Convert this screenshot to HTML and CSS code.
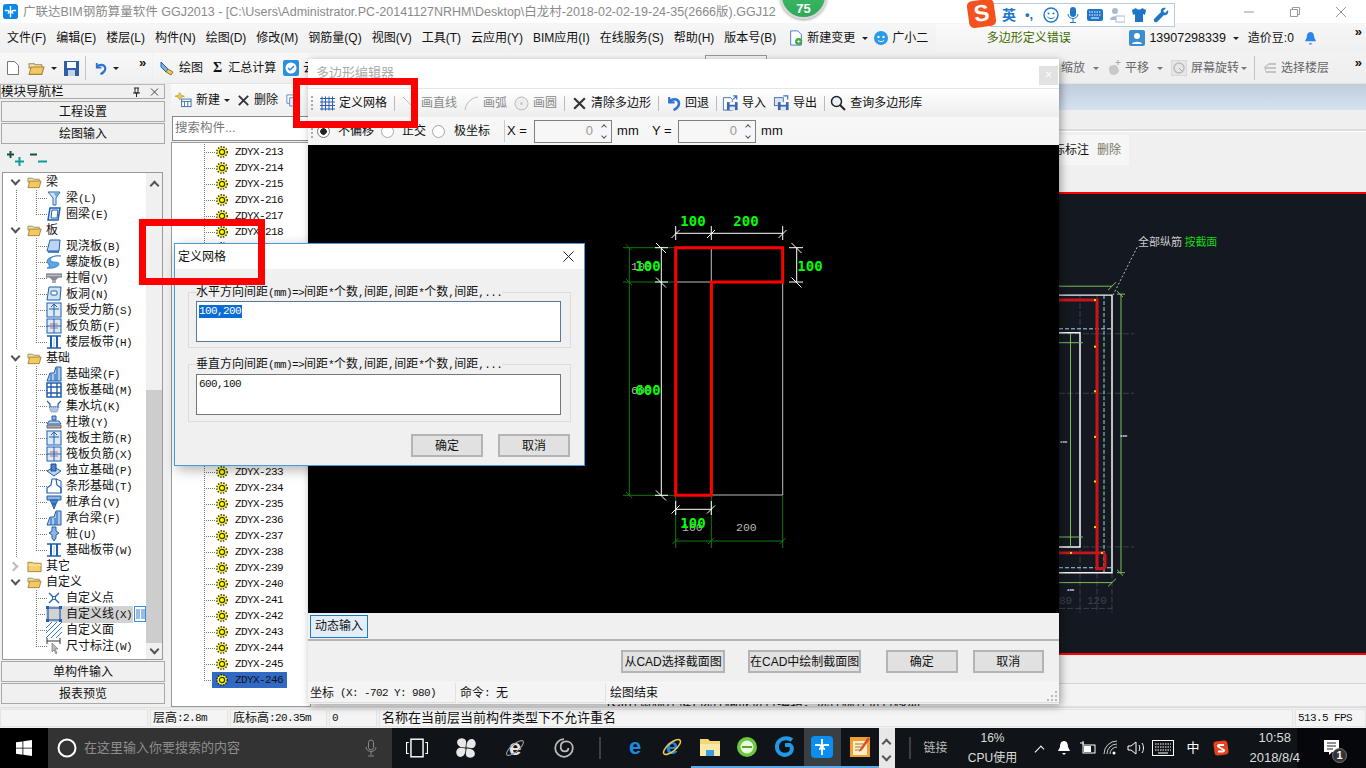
FILE: index.html
```html
<!DOCTYPE html>
<html lang="zh-CN">
<head>
<meta charset="utf-8">
<title>广联达BIM钢筋算量软件 GGJ2013</title>
<link rel="stylesheet" href="styles.css">
</head>
<body>
<svg class="defs" xmlns="http://www.w3.org/2000/svg">
  <symbol id="s-gear" viewBox="0 0 12 12"><circle cx="6" cy="6" r="5" fill="#ff0"/><circle cx="6" cy="6" r="5.2" fill="none" stroke="#222" stroke-width="1.4" stroke-dasharray="1.4 1.4"/><circle cx="6" cy="6" r="2.6" fill="none" stroke="#333" stroke-width="1.2"/></symbol>
  <symbol id="s-open" viewBox="0 0 16 14"><path d="M1 3h5l1 1h6v3H1z" fill="#f5e3a8" stroke="#9a8a5a"/><path d="M1 13l2-7h12l-2 7z" fill="#f3c862" stroke="#a5843a"/></symbol>
  <symbol id="s-closed" viewBox="0 0 16 14"><path d="M1 3h5l1 1h8v9H1z" fill="#f4cf6e" stroke="#a5843a"/><path d="M1 6h14" stroke="#fbeeb8"/></symbol>
  <symbol id="s-x" viewBox="0 0 14 14"><path d="M2 2l10 10M12 2L2 12" stroke="#333" stroke-width="2" fill="none"/></symbol>
  <symbol id="s-undo" viewBox="0 0 14 14"><path d="M3 1v5h5" fill="none" stroke="#2f72d2" stroke-width="2"/><path d="M3 6c2-4 8-4 9 0 .7 3-2 6-5 7" fill="none" stroke="#2f72d2" stroke-width="2.4"/></symbol>
  <symbol id="s-import" viewBox="0 0 18 18"><path d="M1 3h8l2 2v12H1z" fill="#fff" stroke="#3a66ad"/><rect x="5" y="8" width="12" height="9" fill="#3a66ad"/><rect x="8" y="8" width="6" height="3" fill="#fff"/><rect x="8" y="13" width="6" height="4" fill="#dde6f4"/><path d="M12 1h4v4M16 1l-4 4" fill="none" stroke="#2f72d2" stroke-width="1.3"/></symbol>
  <symbol id="s-export" viewBox="0 0 18 18"><rect x="1" y="3" width="10" height="9" fill="#dbe6f5" stroke="#3a66ad"/><rect x="5" y="8" width="12" height="9" fill="#3a66ad"/><rect x="8" y="8" width="6" height="3" fill="#fff"/><rect x="8" y="13" width="6" height="4" fill="#dde6f4"/><path d="M11 1h5v4" fill="none" stroke="#2f72d2" stroke-width="1.3"/></symbol>
  <symbol id="n-beam" viewBox="0 0 16 16"><path d="M2 2h12l-4 6v7H7V8z" fill="#cfe3f7" stroke="#2a6ab5"/><path d="M8 3l5 0-3 4" fill="#6fa8df"/></symbol>
  <symbol id="n-ring" viewBox="0 0 16 16"><path d="M4 2h10l-2 12H2z" fill="#e8f1fb" stroke="#1f5fae" stroke-width="1.5"/><path d="M6 4h6l-1 8H5z" fill="#fff" stroke="#1f5fae"/></symbol>
  <symbol id="n-slab" viewBox="0 0 16 16"><path d="M4 2h10l-1 11H1z" fill="#bcd6f2" stroke="#1f5fae"/><path d="M2 14h11" stroke="#1f5fae" stroke-width="1.5"/></symbol>
  <symbol id="n-spiral" viewBox="0 0 16 16"><path d="M15 2C8 1 3 4 5 7c2 2 8 0 8 3s-7 5-12 4C6 12 1 10 1 7 1 4 8 1 15 2z" fill="#5aa6e8" stroke="#1f5fae" stroke-width=".6"/></symbol>
  <symbol id="n-cap" viewBox="0 0 16 16"><path d="M0 4h16v3H0z" fill="#b8bcc4" stroke="#667"/><path d="M3 7h10l-3 3H6z" fill="#889"/><path d="M6 10h4v3H6z" fill="#aaa"/></symbol>
  <symbol id="n-hole" viewBox="0 0 16 16"><path d="M3 1h12l-1 13H1z" fill="#cfe3f7" stroke="#1f5fae"/><rect x="5" y="5" width="6" height="4" rx="1" fill="#fff" stroke="#1f5fae"/></symbol>
  <symbol id="n-rebar" viewBox="0 0 16 16"><rect x="1" y="1" width="14" height="14" fill="#dbe9f8" stroke="#1f5fae"/><path d="M8 2v12M3 7h10M5 5l3-3 3 3" fill="none" stroke="#1f5fae"/></symbol>
  <symbol id="n-neg" viewBox="0 0 16 16"><rect x="1" y="1" width="14" height="14" fill="#dbe9f8" stroke="#1f5fae"/><path d="M4 6h8M4 10h8" fill="none" stroke="#c04a4a" stroke-width=".8"/><path d="M8 1v14M1 8h14" fill="none" stroke="#1f5fae"/></symbol>
  <symbol id="n-band" viewBox="0 0 16 16"><path d="M1 2h14M1 14h14" stroke="#1f5fae" stroke-width="1.5"/><path d="M5 2v12M11 2v12" stroke="#1f5fae" stroke-width="2"/><path d="M7 4h2v9H7z" fill="#cfe3f7"/></symbol>
  <symbol id="n-found" viewBox="0 0 16 16"><path d="M1 15l3-8h4l2-6h5v14z" fill="#a9c8ec" stroke="#1f5fae"/><path d="M5 8v7M9 8v7M11 2v13" stroke="#1f5fae"/></symbol>
  <symbol id="n-raft" viewBox="0 0 16 16"><rect x="1" y="1" width="14" height="14" fill="#fff" stroke="#1f5fae" stroke-width="1.5"/><path d="M1 5h14M1 11h14M5 1v14M11 1v14" stroke="#1f5fae" stroke-width="1.4"/></symbol>
  <symbol id="n-pit" viewBox="0 0 16 16"><path d="M1 3l3 3v3h8V6l3-3" fill="none" stroke="#1f5fae" stroke-width="1.2"/><path d="M3 9h10l-2 5H5z" fill="#a9c8ec" stroke="#778" stroke-dasharray="1 1"/></symbol>
  <symbol id="n-pier" viewBox="0 0 16 16"><path d="M6 2h4v4H6z" fill="#8fb4de" stroke="#1f5fae"/><path d="M3 7h10l2 3H1z" fill="#bcd6f2" stroke="#1f5fae"/><path d="M1 11h14v3H1z" fill="#aaa" stroke="#667"/></symbol>
  <symbol id="n-iso" viewBox="0 0 16 16"><path d="M1 9l7-4 7 4-7 5z" fill="#bcd6f2" stroke="#1f5fae"/><path d="M5 2h5v7H5z" fill="#4d86c8" stroke="#1f4a8a"/></symbol>
  <symbol id="n-strip" viewBox="0 0 16 16"><path d="M6 1h4l1 6 4 3v5H1v-5l4-3z" fill="#fff" stroke="#1f5fae" stroke-width="1.2"/><path d="M10 1l5 2v12" fill="none" stroke="#1f5fae"/></symbol>
  <symbol id="n-cap2" viewBox="0 0 16 16"><path d="M1 2h14v4H1z" fill="#8fb4de" stroke="#1f5fae"/><path d="M4 6h8l-2 4H6zM6 10h4l-2 5z" fill="#4d86c8" stroke="#1f5fae"/></symbol>
  <symbol id="n-pile" viewBox="0 0 16 16"><path d="M6 1h4v4l3 2-3 2v3l-2 3-2-3V9L3 7l3-2z" fill="#8fb4de" stroke="#1f5fae"/></symbol>
  <symbol id="n-point" viewBox="0 0 16 16"><path d="M3 3l10 10M13 3L3 13" stroke="#1f5fae" stroke-width="1.3"/><circle cx="8" cy="8" r="1.6" fill="#fff" stroke="#1f5fae"/></symbol>
  <symbol id="n-line" viewBox="0 0 16 16"><rect x="2" y="2" width="12" height="12" fill="none" stroke="#1f5fae" stroke-width="1.2"/><path d="M0 0h3v3H0zM13 0h3v3h-3zM0 13h3v3H0zM13 13h3v3h-3z" fill="#1f5fae"/></symbol>
  <symbol id="n-face" viewBox="0 0 16 16"><path d="M0 6L6 0M0 11L11 0M0 16L16 0M5 16L16 5M10 16l6-6" stroke="#3a7ac8"/></symbol>
  <symbol id="n-dim" viewBox="0 0 16 16"><path d="M1 3h13M1 0v6M14 0v6" stroke="#333"/><path d="M6 5l0 9 2-2 2 4 1-1-2-4h3z" fill="#bbb" stroke="#666" stroke-width=".6"/></symbol>
</svg>

<div class="app">
  <header class="titlebar">
    <svg class="logo" viewBox="0 0 16 16"><rect width="16" height="16" rx="3" fill="#0b87e8"/><path d="M8 2v12M2 7h3c2 0 2 3 0 3M14 7h-3c-2 0-2 3 0 3" fill="none" stroke="#fff" stroke-width="1.5"/></svg>
    <span class="title-text">广联达BIM钢筋算量软件 GGJ2013 - [C:\Users\Administrator.PC-20141127NRHM\Desktop\白龙村-2018-02-02-19-24-35(2666版).GGJ12</span>
    <div class="win-controls">
      <svg class="wc" viewBox="0 0 12 12"><path d="M1 6h10" stroke="#999"/></svg>
      <svg class="wc" viewBox="0 0 12 12"><path d="M1.5 3.500h7v7h-7zM3.500 3.500v-2h7v7h-2" fill="none" stroke="#999"/></svg>
      <svg class="wc" viewBox="0 0 12 12"><path d="M1 1l10 10M11 1L1 11" stroke="#999"/></svg>
    </div>
  </header>

  <nav class="menubar">
    <span class="mi">文件(F)</span><span class="mi">编辑(E)</span><span class="mi">楼层(L)</span><span class="mi">构件(N)</span><span class="mi">绘图(D)</span><span class="mi">修改(M)</span><span class="mi">钢筋量(Q)</span><span class="mi">视图(V)</span><span class="mi">工具(T)</span><span class="mi">云应用(Y)</span><span class="mi">BIM应用(I)</span><span class="mi">在线服务(S)</span><span class="mi">帮助(H)</span><span class="mi">版本号(B)</span>
    <span class="mi mi-change"><svg class="ic16" viewBox="0 0 16 18"><path d="M2 1h8l4 4v12H2z" fill="#fff" stroke="#2f72d2"/><circle cx="11" cy="13" r="4" fill="#3aa53a"/><path d="M9 13h4M11 11v4" stroke="#fff"/></svg>新建变更<i class="caret"></i></span>
    <span class="mi mi-bot"><svg class="ic16" viewBox="0 0 16 16"><circle cx="8" cy="8" r="7" fill="#2a9be8"/><circle cx="5.500" cy="7" r="1.200" fill="#fff"/><circle cx="10.500" cy="7" r="1.200" fill="#fff"/><path d="M5 10.500c2 1.500 4 1.500 6 0" stroke="#fff" fill="none"/></svg>广小二</span>
    <span class="msg-tab">多边形定义错误</span>
    <span class="mi mi-user"><svg class="ic16" viewBox="0 0 16 16"><rect width="16" height="16" rx="2" fill="#3d8ecf"/><circle cx="8" cy="6" r="3" fill="#fff"/><path d="M3 14c0-3 10-3 10 0z" fill="#fff"/></svg>13907298339<i class="caret caret-user"></i></span>
    <span class="mi mi-bean">造价豆:0</span>
    <svg class="bell" viewBox="0 0 14 16"><path d="M7 1c3 0 4 3 4 6l2 4H1l2-4c0-3 1-6 4-6z" fill="#2a86e8"/><path d="M5 13h4l-2 2z" fill="#2a86e8"/></svg>
    <span class="chev">»</span>
  </nav>

  <div class="toolbar">
    <div class="tb-seg tb-a">
      <svg class="tb-new" viewBox="0 0 12 14"><path d="M.5.500h7l4 4v9H.5z" fill="#fff" stroke="#777"/></svg>
      <svg class="ic17" viewBox="0 0 16 14"><use href="#s-open"/></svg><i class="caret"></i>
      <svg class="tb-save" viewBox="0 0 15 15"><rect width="15" height="15" fill="#2d5ea8"/><rect x="3" y="1" width="9" height="6" fill="#fff"/><rect x="4" y="9" width="7" height="6" fill="#c5d2e4"/></svg>
      <span class="tb-sep"></span>
      <svg class="ic13" viewBox="0 0 14 14"><use href="#s-undo"/></svg><i class="caret"></i>
      <span class="chev">»</span>
    </div>
    <div class="tb-seg tb-b">
      <span class="tb-i"><svg class="ic16" viewBox="0 0 16 16"><path d="M2 2l7 7-2 3-5-5z" fill="#7fb0e6" stroke="#2a5fa8"/><path d="M9 9l5 3-2 3-5-3z" fill="#e8c468" stroke="#9a7a30"/></svg>绘图</span>
      <span class="tb-i tb-sigma"><b class="sigma">Σ</b>汇总计算</span>
      <span class="tb-i tb-cloud"><svg class="ic16" viewBox="0 0 16 16"><rect width="16" height="16" rx="2" fill="#2b8fe0"/><circle cx="8" cy="8" r="5.500" fill="#fff"/><path d="M5 8l2 2 4-4" stroke="#2b8fe0" fill="none" stroke-width="1.500"/></svg>云</span>
    </div>
    <span class="tb-tab"></span>
    <div class="tb-seg tb-c">
      <span class="tb-i dim">缩放<i class="caret caret-gray"></i></span>
      <span class="tb-i dim"><svg class="ic14" viewBox="0 0 14 16"><path d="M2 8c0-3 6-4 8-2l2 4c0 3-3 5-6 5-3 0-4-3-4-7z" fill="#c8c8c8"/><path d="M11 0v5M8.500 2.500h5" stroke="#aaa"/></svg>平移<i class="caret caret-gray"></i></span>
      <span class="tb-i dim tb-rotate"><svg class="ic16" viewBox="0 0 16 16"><rect width="16" height="16" rx="2" fill="#e6e6e6" stroke="#ccc"/><circle cx="8" cy="8" r="5" fill="none" stroke="#bbb" stroke-width="1.500"/><path d="M8 8l3 3" stroke="#aaa"/></svg>屏幕旋转<i class="caret caret-gray"></i></span>
      <span class="tb-sep"></span>
      <span class="tb-i dim"><svg class="ic14" viewBox="0 0 14 14"><path d="M1 6l5-4h7v2H6L3 6h10v2H3v2h10v2H3z" fill="#c4c4c4"/></svg>选择楼层</span>
      <span class="chev">»</span>
    </div>
  </div>

  <div class="workspace">
    <aside class="nav">
      <div class="nav-title"><span>模块导航栏</span><span class="nav-title-icons"><svg class="ic9" viewBox="0 0 9 10"><path d="M2 1h5M3 1v5h3V1M1 6h7M4.500 6v4" stroke="#222" fill="none"/></svg><svg class="ic9" viewBox="0 0 9 9"><path d="M1 1l7 7M8 1L1 8" stroke="#444"/></svg></span></div>
      <div class="nav-btn">工程设置</div>
      <div class="nav-btn">绘图输入</div>
      <div class="nav-tools">
        <svg class="tool-ic" viewBox="0 0 18 16"><path d="M3.500 0v7M0 3.500h7" stroke="#14553a" stroke-width="2"/><path d="M12.500 6v9M8 10.500h9" stroke="#129a9a" stroke-width="2"/></svg>
        <svg class="tool-ic" viewBox="0 0 18 16"><path d="M0 3.500h7" stroke="#14553a" stroke-width="2"/><path d="M8 10.500h9" stroke="#129a9a" stroke-width="2"/></svg>
      </div>
      <div class="nav-tree">
        <div class="tree-body">
          <div class="trunk">
            <div class="t-head"><i class="arrow open"></i><svg class="folder"><use href="#s-open"/></svg><span>梁</span></div>
            <div class="t-kid"><svg class="n"><use href="#n-beam"/></svg><span class="lbl">梁<span class="lat">(L)</span></span></div>
            <div class="t-kid end"><svg class="n"><use href="#n-ring"/></svg><span class="lbl">圈梁<span class="lat">(E)</span></span></div>
            <div class="t-head"><i class="arrow open"></i><svg class="folder"><use href="#s-open"/></svg><span>板</span></div>
            <div class="t-kid"><svg class="n"><use href="#n-slab"/></svg><span class="lbl">现浇板<span class="lat">(B)</span></span></div>
            <div class="t-kid"><svg class="n"><use href="#n-spiral"/></svg><span class="lbl">螺旋板<span class="lat">(B)</span></span></div>
            <div class="t-kid"><svg class="n"><use href="#n-cap"/></svg><span class="lbl">柱帽<span class="lat">(V)</span></span></div>
            <div class="t-kid"><svg class="n"><use href="#n-hole"/></svg><span class="lbl">板洞<span class="lat">(N)</span></span></div>
            <div class="t-kid"><svg class="n"><use href="#n-rebar"/></svg><span class="lbl">板受力筋<span class="lat">(S)</span></span></div>
            <div class="t-kid"><svg class="n"><use href="#n-neg"/></svg><span class="lbl">板负筋<span class="lat">(F)</span></span></div>
            <div class="t-kid end"><svg class="n"><use href="#n-band"/></svg><span class="lbl">楼层板带<span class="lat">(H)</span></span></div>
            <div class="t-head"><i class="arrow open"></i><svg class="folder"><use href="#s-open"/></svg><span>基础</span></div>
            <div class="t-kid"><svg class="n"><use href="#n-found"/></svg><span class="lbl">基础梁<span class="lat">(F)</span></span></div>
            <div class="t-kid"><svg class="n"><use href="#n-raft"/></svg><span class="lbl">筏板基础<span class="lat">(M)</span></span></div>
            <div class="t-kid"><svg class="n"><use href="#n-pit"/></svg><span class="lbl">集水坑<span class="lat">(K)</span></span></div>
            <div class="t-kid"><svg class="n"><use href="#n-pier"/></svg><span class="lbl">柱墩<span class="lat">(Y)</span></span></div>
            <div class="t-kid"><svg class="n"><use href="#n-rebar"/></svg><span class="lbl">筏板主筋<span class="lat">(R)</span></span></div>
            <div class="t-kid"><svg class="n"><use href="#n-neg"/></svg><span class="lbl">筏板负筋<span class="lat">(X)</span></span></div>
            <div class="t-kid"><svg class="n"><use href="#n-iso"/></svg><span class="lbl">独立基础<span class="lat">(P)</span></span></div>
            <div class="t-kid"><svg class="n"><use href="#n-strip"/></svg><span class="lbl">条形基础<span class="lat">(T)</span></span></div>
            <div class="t-kid"><svg class="n"><use href="#n-cap2"/></svg><span class="lbl">桩承台<span class="lat">(V)</span></span></div>
            <div class="t-kid"><svg class="n"><use href="#n-found"/></svg><span class="lbl">承台梁<span class="lat">(F)</span></span></div>
            <div class="t-kid"><svg class="n"><use href="#n-pile"/></svg><span class="lbl">桩<span class="lat">(U)</span></span></div>
            <div class="t-kid end"><svg class="n"><use href="#n-band"/></svg><span class="lbl">基础板带<span class="lat">(W)</span></span></div>
          </div>
          <div class="t-head"><i class="arrow closed"></i><svg class="folder"><use href="#s-closed"/></svg><span>其它</span></div>
          <div class="t-head"><i class="arrow open"></i><svg class="folder"><use href="#s-open"/></svg><span>自定义</span></div>
          <div class="t-kid"><svg class="n"><use href="#n-point"/></svg><span class="lbl">自定义点</span></div>
          <div class="t-kid sel"><svg class="n"><use href="#n-line"/></svg><span class="lbl lbl-sel">自定义线<span class="lat">(X)</span></span><svg class="mini" viewBox="0 0 12 16"><rect x=".5" y=".5" width="11" height="15" fill="#fff" stroke="#3a8ee0"/><path d="M3 3v10M5 3v10M8 3v10M10 3v10" stroke="#3a7ac8"/></svg></div>
          <div class="t-kid"><svg class="n"><use href="#n-face"/></svg><span class="lbl">自定义面</span></div>
          <div class="t-kid end"><svg class="n"><use href="#n-dim"/></svg><span class="lbl">尺寸标注<span class="lat">(W)</span></span></div>
        </div>
        <div class="vscroll">
          <span class="sb-arrow"><i class="chev-up"></i></span>
          <span class="sb-track"></span>
          <span class="sb-thumb"></span>
          <span class="sb-arrow"><i class="chev-down"></i></span>
        </div>
      </div>
      <div class="nav-btn">单构件输入</div>
      <div class="nav-btn">报表预览</div>
    </aside>

    <section class="comp">
      <div class="comp-tools">
        <span class="tb-i"><svg class="ic17" viewBox="0 0 18 16"><path d="M5 0l1.500 3L10 4 6.500 5 5 8 3.500 5 0 4l3.500-1z" fill="#f2c94c" stroke="#a98a20" stroke-width=".6"/><rect x="7" y="7" width="10" height="8" fill="#fff" stroke="#3a6fb0"/><path d="M7 9.500h10M10 9.500V15M13.500 9.500V15" stroke="#3a6fb0"/></svg>新建<i class="caret"></i></span>
        <span class="tb-i"><svg class="ic13" viewBox="0 0 14 14"><use href="#s-x"/></svg>删除</span>
        <svg class="ic13" viewBox="0 0 12 14"><path d="M1 1h7v9H1z" fill="#fff" stroke="#5a87c0"/><path d="M4 4h7v9H4z" fill="#e6eefa" stroke="#5a87c0"/></svg>
      </div>
      <div class="comp-search">搜索构件...</div>
      <div class="comp-tree">
        <div class="c-row"><svg class="gear"><use href="#s-gear"/></svg><span>ZDYX-213</span></div>
        <div class="c-row"><svg class="gear"><use href="#s-gear"/></svg><span>ZDYX-214</span></div>
        <div class="c-row"><svg class="gear"><use href="#s-gear"/></svg><span>ZDYX-215</span></div>
        <div class="c-row"><svg class="gear"><use href="#s-gear"/></svg><span>ZDYX-216</span></div>
        <div class="c-row"><svg class="gear"><use href="#s-gear"/></svg><span>ZDYX-217</span></div>
        <div class="c-row"><svg class="gear"><use href="#s-gear"/></svg><span>ZDYX-218</span></div>
        <div class="c-row"><svg class="gear"><use href="#s-gear"/></svg><span>ZDYX-219</span></div>
        <div class="c-row"><svg class="gear"><use href="#s-gear"/></svg><span>ZDYX-220</span></div>
        <div class="c-row"><svg class="gear"><use href="#s-gear"/></svg><span>ZDYX-221</span></div>
        <div class="c-row"><svg class="gear"><use href="#s-gear"/></svg><span>ZDYX-222</span></div>
        <div class="c-row"><svg class="gear"><use href="#s-gear"/></svg><span>ZDYX-223</span></div>
        <div class="c-row"><svg class="gear"><use href="#s-gear"/></svg><span>ZDYX-224</span></div>
        <div class="c-row"><svg class="gear"><use href="#s-gear"/></svg><span>ZDYX-225</span></div>
        <div class="c-row"><svg class="gear"><use href="#s-gear"/></svg><span>ZDYX-226</span></div>
        <div class="c-row"><svg class="gear"><use href="#s-gear"/></svg><span>ZDYX-227</span></div>
        <div class="c-row"><svg class="gear"><use href="#s-gear"/></svg><span>ZDYX-228</span></div>
        <div class="c-row"><svg class="gear"><use href="#s-gear"/></svg><span>ZDYX-229</span></div>
        <div class="c-row"><svg class="gear"><use href="#s-gear"/></svg><span>ZDYX-230</span></div>
        <div class="c-row"><svg class="gear"><use href="#s-gear"/></svg><span>ZDYX-231</span></div>
        <div class="c-row"><svg class="gear"><use href="#s-gear"/></svg><span>ZDYX-232</span></div>
        <div class="c-row"><svg class="gear"><use href="#s-gear"/></svg><span>ZDYX-233</span></div>
        <div class="c-row"><svg class="gear"><use href="#s-gear"/></svg><span>ZDYX-234</span></div>
        <div class="c-row"><svg class="gear"><use href="#s-gear"/></svg><span>ZDYX-235</span></div>
        <div class="c-row"><svg class="gear"><use href="#s-gear"/></svg><span>ZDYX-236</span></div>
        <div class="c-row"><svg class="gear"><use href="#s-gear"/></svg><span>ZDYX-237</span></div>
        <div class="c-row"><svg class="gear"><use href="#s-gear"/></svg><span>ZDYX-238</span></div>
        <div class="c-row"><svg class="gear"><use href="#s-gear"/></svg><span>ZDYX-239</span></div>
        <div class="c-row"><svg class="gear"><use href="#s-gear"/></svg><span>ZDYX-240</span></div>
        <div class="c-row"><svg class="gear"><use href="#s-gear"/></svg><span>ZDYX-241</span></div>
        <div class="c-row"><svg class="gear"><use href="#s-gear"/></svg><span>ZDYX-242</span></div>
        <div class="c-row"><svg class="gear"><use href="#s-gear"/></svg><span>ZDYX-243</span></div>
        <div class="c-row"><svg class="gear"><use href="#s-gear"/></svg><span>ZDYX-244</span></div>
        <div class="c-row"><svg class="gear"><use href="#s-gear"/></svg><span>ZDYX-245</span></div>
        <div class="c-row c-last"><svg class="gear"><use href="#s-gear"/></svg><span class="c-sel">ZDYX-246</span></div>
      </div>
    </section>

    <main class="stage">
      <div class="stage-band"></div>
      <div class="stage-gap"></div>
      <div class="stage-attr"><span class="attr-box"><span>坐标标注</span><span class="attr-del">删除</span></span></div>
      <svg class="cad" viewBox="311 192 1055 463" preserveAspectRatio="none">
        <g fill="none" stroke="#3a404c">
          <path d="M1080 294v321M1097 294v321M1112 294v321M1059 333h75M1059 393h75M1059 548h75M1059 610h53" stroke-dasharray="6 2"/>
        </g>
        <g fill="none" stroke="#a9d4ee" stroke-dasharray="4 2">
          <path d="M1104 294v280M1059 328h53M1059 569h53"/>
        </g>
        <g fill="none" stroke="#f2f2f2" stroke-width="1.500">
          <path d="M1059 294h53v280h-53M1059 332h21v216h-21"/>
        </g>
        <g fill="none" stroke="#7cc05a">
          <path d="M1059 285h53M1121 293v281M1117 293h8M1117 574h8M1059 584h53M1070.500 333v215M1059 342h24M1059 538h24"/>
          <path d="M1108 289l8-8M1108 588l8-8M1117 290l6 6M1117 571l6 6"/>
        </g>
        <g fill="none" stroke="#c6161c" stroke-width="3">
          <path d="M1059 299h38v271h5q3 0 3-3v-10q0-3-3-3h-43"/>
        </g>
        <g fill="#ffd800">
          <rect x="1094" y="298" width="2" height="2"/><rect x="1094" y="345" width="2" height="2"/><rect x="1094" y="390" width="2" height="2"/><rect x="1094" y="436" width="2" height="2"/><rect x="1094" y="481" width="2" height="2"/><rect x="1094" y="527" width="2" height="2"/><rect x="1070" y="553" width="2" height="2"/><rect x="1101" y="553" width="2" height="2"/>
        </g>
        <path d="M1113 294l25-50" stroke="#bbb" stroke-dasharray="2 2" fill="none"/>
        <text x="1138" y="244" class="cad-label">全部纵筋 <tspan class="cad-green">按截面</tspan></text>
        <text x="1087" y="606" class="cad-dim">120</text>
        <text x="1059" y="606" class="cad-dim">80</text>
        <text x="1060" y="443" class="cad-tiny">200</text>
        <text x="1120" y="437" class="cad-tiny">200</text>
        <text x="1067" y="592" class="cad-tiny">200</text>
      </svg>
      <div class="stage-lower"></div>
      <div class="stage-hint">(Ctrl+鼠标左键) 选择构成进行编辑，选择标注进行移动</div>
    </main>
  </div>

  <footer class="statusbar">
    <span class="st st-a"></span>
    <span class="st st-b">层高<span class="lat">:2.8m</span></span>
    <span class="st st-c">底标高<span class="lat">:20.35m</span></span>
    <span class="st st-d"><span class="lat">0</span></span>
    <span class="st st-e">名称在当前层当前构件类型下不允许重名</span>
    <span class="st st-f"><span class="lat">513.5 FPS</span></span>
  </footer>

  <div class="taskbar">
    <span class="start"><svg class="win" viewBox="0 0 16 16"><path d="M0 2.300l6.500-.9v6.300H0zM7.300 1.300L16 0v7.700H7.300zM0 8.400h6.500v6.300L0 13.800zM7.300 8.400H16V16l-8.700-1.200z" fill="#fff"/></svg></span>
    <span class="search"><svg class="cortana" viewBox="0 0 20 20"><circle cx="10" cy="10" r="8.500" fill="none" stroke="#fff" stroke-width="2"/></svg><span class="search-text">在这里输入你要搜索的内容</span><svg class="mic" viewBox="0 0 12 18"><rect x="3.500" y="1" width="5" height="10" rx="2.500" fill="none" stroke="#888"/><path d="M1 8c0 6 10 6 10 0M6 13v3M3 17h6" fill="none" stroke="#888"/></svg></span>
    <span class="task t49"><svg class="ti" viewBox="0 0 20 18"><rect x="4.500" y="1" width="11" height="16" fill="none" stroke="#fff" stroke-width="1.300"/><path d="M2.500 4H0.500v10h2M17.500 4h2v10h-2" fill="none" stroke="#fff"/></svg></span>
    <span class="task t49"><svg class="ti" viewBox="0 0 22 22"><g fill="#e8e8e8"><path d="M10.500 10.500C4 11 1 7 2.500 3.500 5 0 10 1 11 4c.5 2-.5 4-.5 6.500z"/><path d="M11.500 10.500C11 4 15 1 18.500 2.500 22 5 21 10 18 11c-2 .5-4-.5-6.500-.5z"/><path d="M11.500 11.500C18 11 21 15 19.500 18.500 17 22 12 21 11 18c-.5-2 .5-4 .5-6.500z"/><path d="M10.500 11.500C11 18 7 21 3.500 19.500 0 17 1 12 4 11c2-.5 4 .5 6.500.5z"/></g></svg></span>
    <span class="task t49"><svg class="ti" viewBox="0 0 24 24"><text x="12" y="20" class="ie-glyph ie-white">e</text><ellipse cx="12" cy="12" rx="11.500" ry="4" transform="rotate(-40 12 12)" fill="none" stroke="#9a9a9a" stroke-width="1.200"/></svg></span>
    <span class="task t49"><svg class="ti" viewBox="0 0 20 20"><path d="M10 2a8 8 0 1 0 8 8c0-4-3-6-6-6s-5 2-5 5 2 4 4 4 3-1 3-3" fill="none" stroke="#bbb" stroke-width="1.600"/></svg></span>
    <span class="tk-sep"></span>
    <span class="task t37"><svg class="ti" viewBox="0 0 24 24"><text x="12" y="20" class="ie-glyph ie-blue">e</text></svg></span>
    <span class="task t37"><svg class="ti" viewBox="0 0 24 24"><text x="12" y="20" class="ie-glyph ie-blue">e</text><ellipse cx="12" cy="12" rx="11.500" ry="4.500" transform="rotate(-40 12 12)" fill="none" stroke="#f2c94c" stroke-width="1.600"/></svg></span>
    <span class="task t37 run"><svg class="ti" viewBox="0 0 22 20"><path d="M1 2h8l2 2h10v15H1z" fill="#f5d77a"/><path d="M1 7h20v12H1z" fill="#fbe9a8"/><path d="M7 13h8v6H7z" fill="#3c9be0"/></svg></span>
    <span class="task t37 run"><svg class="ti" viewBox="0 0 22 22"><circle cx="11" cy="11" r="10" fill="#6cc83c"/><circle cx="11" cy="11" r="6.500" fill="#eafbe0"/><path d="M6 11h10" stroke="#5aa82a" stroke-width="2"/></svg></span>
    <span class="task t37 run"><svg class="ti" viewBox="0 0 22 22"><path d="M18 4C12 0 3 3 3 11c0 7 8 10 13 6 3-3 2-7 0-8h-5" fill="none" stroke="#1e9ae8" stroke-width="4"/></svg></span>
    <span class="task t37 run active"><svg class="ti" viewBox="0 0 22 22"><rect width="22" height="22" rx="4" fill="#0b8ef0"/><path d="M11 3v16M4 9h4c3 0 3 4 0 4M18 9h-4c-3 0-3 4 0 4" fill="none" stroke="#fff" stroke-width="1.800"/></svg></span>
    <span class="task t37 run"><svg class="ti" viewBox="0 0 22 22"><rect x="1" y="1" width="20" height="20" fill="#f0a030"/><path d="M4 5h14v14H4z" fill="#fbeec8"/><path d="M6 8h9M6 11h9M6 14h6" stroke="#a87a30"/><path d="M19 1l-8 12-1 3 3-2 8-11z" fill="#d8502a"/></svg></span>
    <span class="tk-scroll"><i class="chev-up"></i><i class="chev-down"></i></span>
    <span class="tk-sep tk-sep2"></span>
    <span class="tk-link">链接</span>
    <span class="tk-cpu"><span>16%</span><span>CPU使用</span></span>
    <span class="tray">
      <i class="tray-up"></i>
      <svg class="tr" viewBox="0 0 14 16"><path d="M7 1c3 0 4 3 4 6l2 4H1l2-4c0-3 1-6 4-6zM5 13h4l-2 2z" fill="#fff"/></svg>
      <svg class="tr" viewBox="0 0 18 16"><rect x="4" y="5" width="12" height="8" fill="none" stroke="#fff"/><rect x="5" y="6" width="7" height="6" fill="#fff"/><path d="M4 1v4M1 3h4" stroke="#fff"/></svg>
      <svg class="tr" viewBox="0 0 18 16"><path d="M1 14a13 13 0 0 1 13-13M4 14a10 10 0 0 1 10-10M7 14a7 7 0 0 1 7-7" fill="none" stroke="#ccc"/><circle cx="11" cy="13" r="1.500" fill="#fff"/></svg>
      <svg class="tr" viewBox="0 0 18 16"><path d="M1 6h3l5-4v12l-5-4H1z" fill="none" stroke="#fff"/><path d="M12 5c1 2 1 4 0 6M15 3c2 3 2 7 0 10" fill="none" stroke="#fff"/></svg>
      <svg class="tr-kb" viewBox="0 0 22 16"><rect x=".5" y=".5" width="21" height="15" fill="none" stroke="#fff"/><path d="M3 4h16M3 7h16M3 10h16" stroke="#fff" stroke-dasharray="1.500 1"/><path d="M6 13h10" stroke="#fff"/></svg>
      <span class="tr-zh">中</span>
      <svg class="tr" viewBox="0 0 16 16"><rect x="1" y="1" width="14" height="14" rx="3" fill="#e8431a" transform="rotate(-8 8 8)"/><path d="M11 5H6q-1.500 0-1 1.500L11 10q.5 1.500-1 1.500H5" fill="none" stroke="#fff" stroke-width="1.800"/></svg>
    </span>
    <span class="clock"><span>10:58</span><span>2018/8/4</span></span>
    <span class="notify"><svg class="notify-ic" viewBox="0 0 16 16"><path d="M0 0h15v12H8l-3 3v-3H0z" fill="#fff"/><path d="M3 3h9M3 6h9M3 9h6" stroke="#222"/></svg><b class="notify-n">1</b></span>
  </div>

  <div class="badge"><span>75</span></div>

  <div class="ime">
    <span class="ime-s"><span>S</span></span>
    <span class="ime-bar">
      <b class="ime-en">英</b>
      <b class="ime-punc">•,</b>
      <svg class="ime-ic" viewBox="0 0 16 16"><circle cx="8" cy="8" r="7" fill="none" stroke="#1e76c8" stroke-width="1.400"/><circle cx="5.500" cy="6.500" r="1" fill="#1e76c8"/><circle cx="10.500" cy="6.500" r="1" fill="#1e76c8"/><path d="M4.500 10c2 2 5 2 7 0" stroke="#1e76c8" fill="none"/></svg>
      <svg class="ime-ic" viewBox="0 0 16 16"><rect x="5" y="0" width="6" height="10" rx="3" fill="#1e76c8"/><path d="M3 7c0 6 10 6 10 0M8 12v3M5 15.500h6" stroke="#1e76c8" fill="none"/></svg>
      <svg class="ime-ic" viewBox="0 0 16 16"><rect y="2" width="16" height="12" rx="2" fill="#1e76c8"/><path d="M2 5h12M2 8h12" stroke="#fff" stroke-dasharray="1.500 1"/><path d="M4 11h8" stroke="#fff"/></svg>
      <svg class="ime-ic" viewBox="0 0 16 16"><circle cx="6" cy="4" r="3" fill="#a9bccf"/><path d="M1 13c0-5 9-5 9 0z" fill="#a9bccf"/><rect x="7" y="9" width="9" height="6" fill="#fff" stroke="#a9bccf"/></svg>
      <svg class="ime-ic" viewBox="0 0 16 16"><path d="M5 1L1 3l1 5 2-1v8h8V7l2 1 1-5-4-2c-1 2-5 2-6 0z" fill="#1e76c8"/></svg>
      <svg class="ime-ic" viewBox="0 0 16 16"><path d="M15 3l-3 3-2-2 3-3c-3-1-6 1-5 4L1 12c-1 2 1 4 3 3l7-7c3 1 5-2 4-5z" fill="#1e76c8"/></svg>
    </span>
  </div>

  <section class="poly">
    <div class="poly-title"><span class="poly-name">多边形编辑器</span><span class="poly-close">×</span></div>
    <div class="poly-tools">
      <i class="grip"></i>
      <span class="tb-i"><svg class="ic15" viewBox="0 0 15 14"><path d="M0 2h15M0 5.500h15M0 9h15M0 12.500h15M2 0v14M5.500 0v14M9 0v14M12.500 0v14" stroke="#2a5fb0"/></svg>定义网格</span>
      <span class="pt-sep"></span>
      <span class="tb-i dim2"><svg class="ic15" viewBox="0 0 15 15"><path d="M1 1l13 13" stroke="#bbb"/></svg>画直线</span>
      <span class="tb-i dim2"><svg class="ic15" viewBox="0 0 15 15"><path d="M1 14C2 7 7 2 14 1" fill="none" stroke="#bbb"/></svg>画弧</span>
      <span class="tb-i dim2"><svg class="ic15" viewBox="0 0 15 15"><circle cx="7.500" cy="7.500" r="6.500" fill="#eee" stroke="#bbb"/><circle cx="7.500" cy="7.500" r="1.500" fill="#ccc"/></svg>画圆</span>
      <span class="pt-sep"></span>
      <span class="tb-i"><svg class="ic15" viewBox="0 0 14 14"><use href="#s-x"/></svg>清除多边形</span>
      <span class="pt-sep"></span>
      <span class="tb-i"><svg class="ic15" viewBox="0 0 14 14"><use href="#s-undo"/></svg>回退</span>
      <span class="pt-sep pt-sep-tight"></span>
      <span class="tb-i tb-disk"><svg class="ic17" viewBox="0 0 18 18"><use href="#s-import"/></svg>导入</span>
      <span class="tb-i tb-disk"><svg class="ic17" viewBox="0 0 18 18"><use href="#s-export"/></svg>导出</span>
      <span class="pt-sep pt-sep-tight"></span>
      <span class="tb-i"><svg class="ic16" viewBox="0 0 16 16"><circle cx="6.500" cy="6.500" r="5" fill="#eaf3fb" stroke="#222" stroke-width="1.500"/><path d="M10 10l5 5" stroke="#222" stroke-width="2"/></svg>查询多边形库</span>
    </div>
    <div class="poly-opts">
      <i class="grip"></i>
      <label class="radio on">不偏移</label>
      <label class="radio r2">正交</label>
      <label class="radio r3">极坐标</label>
      <span class="opt-sep"></span>
      <span class="xy">X =</span>
      <span class="spin"><span>0</span><span class="spin-btns"><i class="chev-up small"></i><i class="chev-down small"></i></span></span>
      <span class="unit">mm</span>
      <span class="xy xy-y">Y =</span>
      <span class="spin"><span>0</span><span class="spin-btns"><i class="chev-up small"></i><i class="chev-down small"></i></span></span>
      <span class="unit">mm</span>
    </div>
    <svg class="poly-canvas" viewBox="308 145 751 468">
      <g fill="none" stroke="#bdbdbd">
        <path d="M711.300 248v34M676 282h35M782.700 282v213M711 495h72"/>
      </g>
      <g fill="none" stroke="#0f7a0f">
        <path d="M623 247.700h53M623 282h53M623 495.300h53M629.300 247.700v247.600"/>
        <path d="M626 244.500l6 6M626 279l6 6M626 492l6 6"/>
        <path d="M675.700 495v53M711.300 495v53M782.700 495v53M675.700 541h107"/>
        <path d="M672.500 544l6-6M708 544l6-6M779.500 544l6-6"/>
      </g>
      <g fill="none" stroke="#fff">
        <path d="M675.700 233.300h107M675.700 226v14M711.300 226v14M782.700 226v14M671.500 238l8-8M707 238l8-8M778.500 238l8-8"/>
        <path d="M661.300 247.700v247.600M655 247.700h13M655 282h13M655 495.300h13M656 243l10 10M656 277.500l10 10M656 490.500l10 10"/>
        <path d="M796.700 247.700V282M789 247.700h14M789 282h14M791.500 243l10 10M791.500 277.500l10 10"/>
        <path d="M675.700 501v14M711.300 501v14M675.700 509.300h35.600M671.500 513.500l8-8M707 513.500l8-8"/>
      </g>
      <g class="dim-gray">
        <text x="631" y="270">100</text>
        <text x="631" y="394">600</text>
        <text x="682" y="531">100</text>
        <text x="736" y="531">200</text>
      </g>
      <path d="M675.700 247.700h107v34.300h-71.300v213.300h-35.700z" fill="none" stroke="#f00" stroke-width="3"/>
      <g class="dim-green">
        <text x="693" y="226">100</text>
        <text x="746" y="226">200</text>
        <text x="648" y="271">100</text>
        <text x="648" y="395">600</text>
        <text x="810" y="271">100</text>
        <text x="693" y="528">100</text>
      </g>
    </svg>
    <div class="poly-tab"><span class="dyn-btn">动态输入</span></div>
    <div class="poly-actions">
      <span class="btn btn-a">从CAD选择截面图</span>
      <span class="btn btn-b">在CAD中绘制截面图</span>
      <span class="btn btn-c">确定</span>
      <span class="btn btn-c btn-last">取消</span>
    </div>
    <div class="poly-status">
      <span class="ps ps-a">坐标<span class="lat">&nbsp;(X:&nbsp;-702&nbsp;Y:&nbsp;980)</span></span>
      <span class="ps ps-b">命令<span class="lat">:&nbsp;</span>无</span>
      <span class="ps ps-c">绘图结束</span>
      <svg class="resize" viewBox="0 0 12 12"><path d="M9 1h2v2H9zM5 5h2v2H5zM9 5h2v2H9zM1 9h2v2H1zM5 9h2v2H5zM9 9h2v2H9z" fill="#bbb"/></svg>
    </div>
  </section>

  <section class="grid-dlg">
    <div class="dlg-title"><span>定义网格</span><svg class="dlg-x" viewBox="0 0 11 11"><path d="M.5.5l10 10M10.500.5l-10 10" stroke="#222" fill="none"/></svg></div>
    <div class="dlg-body">
      <fieldset class="grp">
        <legend>水平方向间距<span class="lat">(mm)=&gt;</span>间距<span class="lat">*</span>个数<span class="lat">,</span>间距<span class="lat">,</span>间距<span class="lat">*</span>个数<span class="lat">,</span>间距<span class="lat">,...</span></legend>
        <div class="ta ta-focus"><span class="ta-sel lat">100,200</span></div>
      </fieldset>
      <fieldset class="grp grp2">
        <legend>垂直方向间距<span class="lat">(mm)=&gt;</span>间距<span class="lat">*</span>个数<span class="lat">,</span>间距<span class="lat">,</span>间距<span class="lat">*</span>个数<span class="lat">,</span>间距<span class="lat">,...</span></legend>
        <div class="ta"><span class="lat">600,100</span></div>
      </fieldset>
      <div class="dlg-actions"><span class="btn btn-c">确定</span><span class="btn btn-c">取消</span></div>
    </div>
  </section>

  <div class="mark mark-a"></div>
  <div class="mark mark-b"></div>
</div>
</body>
</html>
```

FILE: styles.css
```css
* { box-sizing: border-box; }
html, body { margin: 0; padding: 0; }
body { width: 1366px; height: 768px; overflow: hidden; background: #f0f0f0; font: 12px/16px "Liberation Sans", "Noto Sans CJK SC", sans-serif; color: #111; }
.defs { display: none; }
i { display: inline-block; font-style: normal; }
svg { display: block; flex: none; }
.lat { font: 11px/16px "Liberation Mono", monospace; letter-spacing: -.6px; }

.app { position: relative; width: 1366px; height: 768px; display: flex; flex-direction: column; overflow: hidden; }

.titlebar { height: 23px; flex: none; background: #fff; display: flex; align-items: center; padding-left: 3px; }
.logo { width: 15px; height: 15px; margin-right: 5px; }
.title-text { color: #8a8a8a; font-size: 12.500px; white-space: nowrap; width: 760px; overflow: hidden; }
.win-controls { margin-left: auto; display: flex; gap: 34px; padding-right: 19px; }
.wc { width: 12px; height: 12px; }

.menubar { height: 30px; flex: none; background: linear-gradient(#f6f6f6, #f0f0f0); display: flex; align-items: center; padding-left: 7px; gap: 10px; white-space: nowrap; position: relative; }
.mi { display: flex; align-items: center; gap: 4px; }
.mi-change { margin-left: 2px; gap: 3px; }
.mi-bot { margin-left: -5px; gap: 3px; }
.caret { width: 0; height: 0; border-left: 3px solid transparent; border-right: 3px solid transparent; border-top: 3px solid #222; margin-left: 4px; }
.caret-gray { border-top-color: #777; }
.caret-user { margin-left: 3px; }
.msg-tab { width: 185px; height: 28px; margin-left: -2px; display: flex; align-items: center; justify-content: center; color: #3f6b00; font-size: 12px; background: linear-gradient(#fafafa, #f2f2f2); }
.mi-user { margin-left: -2px; color: #111; font-size: 12.500px; }
.mi-bean { margin-left: -1px; font-size: 12px; }
.bell { width: 13px; height: 15px; margin-left: 0; }
.chev { font: bold 13px/10px "Liberation Sans", sans-serif; align-self: flex-start; color: #111; }
.menubar .chev { margin: 4px 4px 0 auto; }

.toolbar { height: 31px; flex: none; display: flex; align-items: center; background: linear-gradient(#f2f2f2, #eeeeee); border-bottom: 1px solid #e4e4e4; white-space: nowrap; }
.tb-seg { display: flex; align-items: center; height: 100%; }
.tb-a { width: 152px; padding-left: 7px; background: linear-gradient(#f8f8f8, #f0f0f0); }
.tb-a .chev { margin: 5px 0 0 20px; }
.tb-new { width: 12px; height: 14px; margin-right: 9px; }
.tb-save { width: 15px; height: 15px; margin-left: 7px; }
.tb-a .caret { margin-left: 6px; }
.tb-sep { width: 1px; height: 24px; background: #c4c4c4; margin: 0 8px 0 6px; }
.tb-b { width: 552px; padding-left: 6px; margin-left: 1px; gap: 10px; background: linear-gradient(#f8f8f8, #f0f0f0); }
.tb-i { display: inline-flex; align-items: center; gap: 4px; }
.tb-sigma { gap: 6px; }
.tb-cloud { margin-left: -3px; }
.sigma { font: bold 14px "Liberation Serif", serif; }
.tb-tab { width: 62px; height: 28px; align-self: flex-end; border: 1px solid #999; border-bottom: 0; background: #f6f6f6; }
.tb-c { margin-left: 294px; gap: 8px; color: #666; flex: 1; font-size: 12px; }
.dim { color: #666; }
.tb-rotate .caret { margin-left: -2px; }
.tb-c .tb-sep { margin: 0 0 0 -1px; }
.tb-c .chev { margin: 5px 0 0 auto; padding-right: 4px; }
.ic9 { width: 9px; height: 10px; }
.ic13 { width: 13px; height: 13px; }
.ic14 { width: 14px; height: 16px; }
.ic15 { width: 15px; height: 15px; }
.ic16 { width: 16px; height: 16px; }
.ic17 { width: 17px; height: 16px; }

.workspace { height: 623px; flex: none; display: flex; background: #f0f0f0; }

.nav { width: 165px; flex: none; display: flex; flex-direction: column; }
.nav-title { height: 15px; flex: none; border: 1px solid #aaa; border-top-color: #bbb; display: flex; justify-content: space-between; align-items: center; font-size: 12.500px; padding: 0 5px 0 0; margin-bottom: 2px; }
.nav-title-icons { display: flex; gap: 9px; }
.nav-btn { height: 21px; flex: none; margin: 0 0 1px 1px; border: 1px solid #a8a8a8; background: #f0f0f0; text-align: center; line-height: 20px; font-size: 12px; }
.nav-tools { height: 27px; flex: none; display: flex; gap: 5px; align-items: center; padding-left: 7px; }
.tool-ic { width: 18px; height: 16px; }
.nav-tree { height: 488px; flex: none; margin: 0 2px 1px 2px; border: 1px solid #999; background: #fff; display: flex; overflow: hidden; }
.tree-body { width: 143px; flex: none; padding-top: 1px; overflow: hidden; }
.trunk { background: repeating-linear-gradient(to bottom, #777 0 1px, transparent 1px 2px) 13px 0 / 1px 100% no-repeat; }
.t-head { height: 16px; display: flex; align-items: center; padding-left: 9px; white-space: nowrap; background: linear-gradient(#fff, #fff) 0 0 / 24px 100% no-repeat; }
.arrow { width: 7px; height: 7px; margin-right: 8px; border-right: 2px solid #555; border-bottom: 2px solid #555; }
.arrow.open { transform: translateY(-2px) rotate(45deg); }
.arrow.closed { transform: translateX(-2px) rotate(-45deg); border-color: #bbb; }
.folder { width: 15px; height: 14px; margin-right: 4px; }
.t-kid { height: 16px; display: flex; align-items: center; padding-left: 43px; white-space: nowrap;
  background:
    repeating-linear-gradient(to right, #777 0 1px, transparent 1px 2px) 33px 8px / 11px 1px no-repeat,
    repeating-linear-gradient(to bottom, #777 0 1px, transparent 1px 2px) 33px 0 / 1px 100% no-repeat; }
.t-kid.end {
  background:
    repeating-linear-gradient(to right, #777 0 1px, transparent 1px 2px) 33px 8px / 11px 1px no-repeat,
    repeating-linear-gradient(to bottom, #777 0 1px, transparent 1px 2px) 33px 0 / 1px 50% no-repeat; }
.n { width: 16px; height: 16px; margin-right: 4px; }
.lbl { display: inline-block; }
.lbl-sel { background: #d2d2d2; width: 71px; margin-left: -4px; padding-left: 4px; }
.t-kid.sel .n { background: #d2d2d2; margin-right: 4px; }
.mini { width: 12px; height: 16px; margin-left: 1px; }
.vscroll { flex: 1; display: flex; flex-direction: column; background: #f0f0f0; }
.sb-arrow { height: 16px; flex: none; display: flex; align-items: center; justify-content: center; }
.vscroll .sb-arrow:first-child { margin-top: 3px; }
.sb-track { height: 198px; flex: none; }
.sb-thumb { flex: 1; background: #cdcdcd; }
.chev-up, .chev-down { width: 7px; height: 7px; border-left: 2px solid #555; border-top: 2px solid #555; transform: rotate(45deg); margin-top: 3px; }
.chev-down { transform: rotate(225deg); margin-top: -3px; }
.chev-up.small, .chev-down.small { width: 4px; height: 4px; border-width: 1px; margin: 0; }

.comp { width: 140px; flex: none; margin-left: 6px; display: flex; flex-direction: column; }
.comp-tools { height: 32px; flex: none; display: flex; align-items: center; gap: 7px; padding-left: 4px; background: linear-gradient(#fafafa, #f0f0f0); }
.comp-tools .caret { margin-left: 0; }
.comp-search { height: 25px; flex: none; margin: 0 0 1px 1px; border: 1px solid #888; background: #fff; color: #777; padding: 3px 2px; font-size: 12.500px; }
.comp-tree { flex: 1; background: #fff; border: 1px solid #999; padding-top: 1px; font: 11px/16px "Liberation Mono", monospace; letter-spacing: -.6px; overflow: hidden; }
.c-row { height: 16px; display: flex; align-items: center; padding-left: 44px;
  background:
    repeating-linear-gradient(to right, #777 0 1px, transparent 1px 2px) 32px 8px / 11px 1px no-repeat,
    repeating-linear-gradient(to bottom, #777 0 1px, transparent 1px 2px) 32px 0 / 1px 100% no-repeat; }
.c-last { background-size: 11px 1px, 1px 50%; }
.gear { width: 12px; height: 12px; margin-right: 7px; }
.c-sel { background: #316ac5; margin-left: -23px; padding-left: 23px; width: 75px; }
.c-last .gear { position: relative; z-index: 1; }

.stage { flex: 1; min-width: 0; display: flex; flex-direction: column; }
.stage-band { height: 26px; flex: none; background: linear-gradient(#bfcddd, #d6e2f0); }
.stage-gap { height: 21px; flex: none; background: #efefef; border-bottom: 2px solid #dcdcdc; }
.stage-attr { height: 61px; flex: none; padding-left: 730px; padding-top: 3px; background: #f0f0f0; border-top: 1px solid #fff; }
.attr-box { display: inline-flex; gap: 8px; height: 30px; align-items: center; padding-right: 8px; font-size: 12px; background: #f6f6f6; white-space: nowrap; }
.attr-del { color: #776; }
.cad { width: 100%; height: 463px; flex: none; background: #141820; border-top: 2px solid #f00; border-bottom: 2px solid #f00; }
.cad-label { font: 11px "Noto Sans CJK SC", sans-serif; fill: #c8c8c8; }
.cad-green { fill: #17d517; }
.cad-dim { font: 11px "Liberation Mono", monospace; fill: #3c424e; }
.cad-tiny { font: bold 4px "Liberation Mono", monospace; fill: #dde; }
.stage-lower { height: 29px; flex: none; background: #f0f0f0; border-bottom: 1px solid #d4d4d4; }
.stage-hint { flex: 1; padding-left: 296px; border-top: 3px solid #f4f4f4; background: #f3f3f3; white-space: nowrap; font-size: 13px; line-height: 32px; overflow: hidden; border-bottom: 1px solid #ddd; }

.statusbar { height: 21px; flex: none; display: flex; gap: 2px; padding: 1px 0; background: #f0f0f0; border-top: 1px solid #ddd; white-space: nowrap; font-size: 12px; }
.st { display: flex; align-items: center; padding-left: 2px; background: #f4f4f4; border: 1px solid #e4e4e4; }
.st-a { width: 148px; }
.st-b { width: 78px; }
.st-c { width: 97px; }
.st-d { width: 48px; }
.st-e { width: 914px; font-size: 13px; }
.st-f { flex: 1; }
.st-f .lat, .st-d .lat { color: #111; }

.taskbar { height: 40px; flex: none; display: flex; align-items: center; background: #101418; color: #ddd; white-space: nowrap; }
.start { width: 48px; height: 100%; background: #000; display: flex; align-items: center; justify-content: center; }
.win { width: 16px; height: 16px; }
.search { width: 344px; height: 100%; background: #333; display: flex; align-items: center; padding-left: 9px; color: #8d8d8d; font-size: 13px; }
.cortana { width: 20px; height: 20px; margin-right: 7px; }
.search-text { flex: 1; }
.mic { width: 12px; height: 18px; margin-right: 15px; }
.task { height: 100%; display: flex; align-items: center; justify-content: center; flex: none; }
.t49 { width: 49px; }
.t37 { width: 37.500px; border-bottom: 2px solid transparent; }
.run { border-bottom-color: #5da8e6; }
.active { background: #3a3f44; }
.ti { width: 22px; height: 22px; }
.ie-glyph { font: bold 24px "Liberation Sans", sans-serif; text-anchor: middle; }
.ie-white { fill: #e6e6e6; }
.ie-blue { fill: #1e88e0; }
.tk-sep { width: 2px; height: 22px; margin: 0 15px 0 11px; background: #3c4045; }
.tk-scroll { width: 16px; height: 100%; display: flex; flex-direction: column; gap: 9px; align-items: center; justify-content: center; background: #e8e8e8; }
.tk-sep2 { margin: 0 13px 0 14px; }
.tk-link { width: 24px; font-size: 12px; color: #bbb; margin-right: 19px; line-height: 13px; }
.tk-cpu { width: 52px; display: flex; flex-direction: column; align-items: center; font-size: 12px; line-height: 20px; }
.tray { display: flex; align-items: center; gap: 6px; margin-left: 14px; width: 197px; flex: none; }
.tray-up { width: 9px; height: 9px; border-left: 1.500px solid #fff; border-top: 1.500px solid #fff; transform: rotate(45deg); margin: 5px 8px 0 4px; }
.tr { width: 18px; height: 16px; }
.tr-kb { width: 22px; height: 16px; margin-left: 1px; }
.tr-zh { font-size: 13px; color: #fff; margin: 0 6px; }
.clock { flex: 1; min-width: 0; position: relative; z-index: 1; display: flex; flex-direction: column; align-items: center; padding-left: 23px; font-size: 13px; line-height: 20px; }
.notify { width: 69px; flex: none; height: 100%; background: #05070a; display: flex; align-items: center; justify-content: center; position: relative; }
.notify-ic { width: 16px; height: 16px; }
.notify-n { position: absolute; left: 35px; top: 20px; width: 15px; height: 15px; border-radius: 50%; background: #333; border: 1px solid #777; color: #fff; font: bold 11px/13px "Liberation Sans", sans-serif; text-align: center; }

.badge { position: absolute; left: 780px; top: -28px; width: 47px; height: 47px; border-radius: 50%; background: linear-gradient(#3fc76d, #2fa858); border: 2px solid #d8d8d8; box-shadow: 0 1px 3px rgba(0,0,0,.4); color: #fff; font: bold 13px/16px "Liberation Sans", sans-serif; text-align: center; padding-top: 27px; }

.ime { position: absolute; left: 968px; top: 0; height: 27px; display: flex; align-items: flex-start; }
.ime-s { position: absolute; left: 0; top: 0; width: 27px; height: 27px; background: #f4511e; border-radius: 5px; transform: rotate(-8deg); color: #fff; font: bold 23px/27px "Liberation Sans", sans-serif; text-align: center; z-index: 1; }
.ime-bar { margin-left: 22px; margin-top: 3px; width: 185px; height: 24px; background: #fff; border: 1px solid #b5cce0; display: flex; align-items: center; padding-left: 11px; gap: 6px; color: #1e76c8; }
.ime-en { font-size: 14px; margin-right: 3px; }
.ime-punc { font-size: 13px; width: 12px; }
.ime-ic { width: 16px; height: 16px; }

.poly { position: absolute; left: 308px; top: 59px; width: 751px; height: 645px; background: #f0f0f0; box-shadow: 2px 2px 8px rgba(0,0,0,.35); display: flex; flex-direction: column; }
.poly-title { height: 30px; flex: none; display: flex; justify-content: space-between; align-items: flex-start; background: #fff; border-bottom: 1px solid #e6e6e6; }
.poly-name { color: #aaa; font-size: 13px; margin: 6px 0 0 8px; }
.poly-close { width: 19px; height: 19px; margin: 7px 1px 0 0; background: #e2e2e2; color: #fff; text-align: center; line-height: 18px; }
.poly-tools { height: 28px; flex: none; display: flex; align-items: center; gap: 7px; padding-left: 3px; background: linear-gradient(#fff, #ededed); white-space: nowrap; }
.grip { width: 2px; height: 14px; background: repeating-linear-gradient(to bottom, #aaa 0 2px, transparent 2px 4px); }
.pt-sep { width: 1px; height: 15px; background: #bbb; }
.pt-sep-tight { margin-right: -2px; }
.tb-disk { gap: 3px; }
.dim2 { color: #888; }
.poly-opts { height: 28px; flex: none; display: flex; align-items: center; padding-left: 3px; background: linear-gradient(#f8f8f8, #f4f4f4); white-space: nowrap; font-size: 12px; }
.radio { display: inline-flex; align-items: center; gap: 8px; margin-left: 4px; }
.radio::before { content: ""; width: 11px; height: 11px; border-radius: 50%; border: 1px solid #a8a8a8; background: #fff; }
.radio.on::before { background: radial-gradient(circle, #222 0 3px, #fff 3.500px); border-color: #777; }
.r2 { margin-left: 7px; }
.r3 { margin-left: 6px; gap: 9px; }
.opt-sep { width: 1px; height: 22px; background: #ccc; margin: 0 2px 0 14px; }
.xy { font-size: 13px; width: 27px; }
.spin { width: 78px; height: 23px; border: 1px solid #808080; background: #f7f7f7; color: #999; font-size: 13px; display: flex; align-items: center; justify-content: flex-end; padding-right: 3px; gap: 7px; }
.spin-btns { display: flex; flex-direction: column; gap: 5px; align-items: center; width: 8px; }
.unit { font-size: 13px; margin-left: 5px; width: 35px; }
.xy-y { width: 26px; }
.poly-canvas { width: 751px; height: 468px; flex: none; background: #000; }
.dim-green text { font: bold 14px "DejaVu Sans Mono", monospace; fill: #0f0; text-anchor: middle; }
.dim-gray text { font: 11.500px "Liberation Mono", monospace; fill: #bbb; }
.poly-tab { height: 28px; flex: none; padding: 2px 0 0 2px; border-bottom: 2px solid #b4b4b4; }
.dyn-btn { display: block; width: 58px; height: 23px; border: 1px solid #1f7ac8; background: #e4eef8; text-align: center; line-height: 21px; }
.poly-actions { height: 42px; flex: none; display: flex; align-items: center; padding-left: 313px; border-bottom: 1px solid #f8f8f8; }
.btn { height: 23px; border: 2px solid #b4b4b4; background: #e1e1e1; display: flex; align-items: center; justify-content: center; white-space: nowrap; }
.btn-a { width: 105px; margin-right: 23px; }
.btn-b { width: 113px; margin-right: 25px; }
.btn-c { width: 72px; }
.poly-actions .btn-c { margin-right: 15px; }
.poly-status { height: 20px; flex: none; display: flex; gap: 2px; background: #f4f4f4; position: relative; white-space: nowrap; }
.ps { display: flex; align-items: center; padding-left: 2px; border-right: 1px solid #e2e2e2; border-bottom: 1px solid #ddd; }
.ps-a { width: 148px; }
.ps-b { width: 148px; }
.ps-c { flex: 1; border-right: 0; }
.resize { position: absolute; right: 1px; bottom: 1px; width: 12px; height: 12px; }

.grid-dlg { position: absolute; left: 174px; top: 243px; width: 411px; height: 223px; border: 1px solid #4a9ae0; background: #f0f0f0; box-shadow: 3px 4px 12px rgba(0,0,0,.3); display: flex; flex-direction: column; }
.dlg-title { height: 25px; flex: none; background: #fff; display: flex; align-items: center; justify-content: space-between; padding: 0 10px 0 3px; font-size: 12px; }
.dlg-x { width: 11px; height: 11px; }
.dlg-body { flex: 1; padding: 17px 13px 0 13px; }
.grp { margin: 0; padding: 0 9px 0 7px; height: 62px; border: 1px solid #dcdcdc; min-width: 0; }
.grp2 { margin-top: 10px; height: 64px; }
.grp legend { padding: 0; margin: 0; height: 12px; font-size: 12px; line-height: 12px; white-space: nowrap; }
.grp legend .lat { line-height: 12px; }
.ta { height: 41px; border: 1px solid #6f7f8f; background: #fff; padding: 2px; margin-top: 3px; line-height: 13px; }
.ta .lat { line-height: 13px; }
.grp2 .ta { margin-top: 4px; border-color: #777; }
.ta-focus { border-color: #5a7a9a; }
.ta-sel { background: #0a6cd6; color: #fff; display: inline-block; padding-right: 1px; }
.dlg-actions { display: flex; justify-content: flex-end; gap: 15px; margin-top: 12px; padding-right: 1px; }

.mark { position: absolute; border: 7px solid #f00; pointer-events: none; }
.mark-a { left: 293px; top: 78px; width: 125px; height: 50px; }
.mark-b { left: 139px; top: 219px; width: 126px; height: 66px; }
```
